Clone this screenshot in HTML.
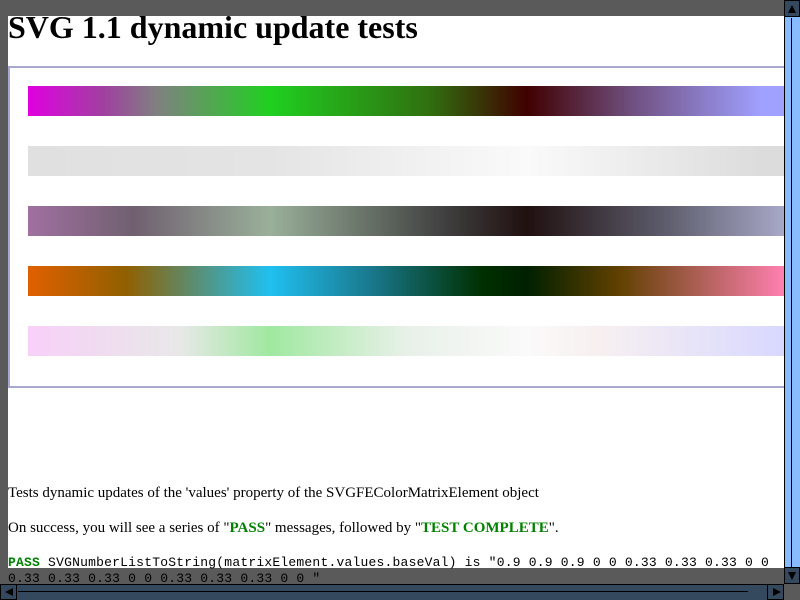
<!DOCTYPE html>
<html><head><style>
*{margin:0;padding:0}
body{width:800px;height:600px;background:#5a5a5a;position:relative;overflow:hidden;font-family:"Liberation Serif",serif}
.wh{position:absolute;left:8px;top:16px;width:776px;height:552px;background:#fff}
h1{position:absolute;left:8px;top:9px;font-size:32px;font-weight:bold;white-space:nowrap;line-height:36px}
.box{position:absolute;left:8px;top:66px;width:790px;height:318px;border:2px solid #a8a8d0;border-right:none}
.bar{position:absolute;left:28px;width:756px;height:30px}
.t{position:absolute;left:8px;font-size:15px;white-space:nowrap}
.g{color:#008000;font-weight:bold}
.m{position:absolute;left:8px;font-family:"Liberation Mono",monospace;font-size:13px;letter-spacing:0.21px;white-space:nowrap;line-height:16px}
.vs{position:absolute;left:784px;top:0;width:16px;height:584px;background:#88bbff;border-left:1px solid #000;box-sizing:border-box}
.btn{position:absolute;background:#34495e;border:1px solid #000;box-sizing:border-box}
.hs{position:absolute;left:0;top:584px;width:784px;height:16px;background:#34495e;border-top:1px solid #000;box-sizing:border-box}
</style></head><body>
<div class="wh"></div>
<h1>SVG 1.1 dynamic update tests</h1>
<div class="box"></div>
<div class="bar" style="top:86px;background:linear-gradient(90deg,#e000e0 0%,#a040a0 10%,#808080 17%,#20d020 32%,#307010 53%,#400000 66%,#705080 80%,#a0a0ff 97%,#a0a0ff 100%)"></div>
<div class="bar" style="top:146px;background:linear-gradient(90deg,#e0e0e0 0%,#e4e4e4 32%,#fafafa 66%,#dcdcdc 97%)"></div>
<div class="bar" style="top:206px;background:linear-gradient(90deg,#a070a0 0%,#706070 14%,#9ab09a 32%,#404040 55%,#201010 66%,#606070 85%,#a8a8c8 100%)"></div>
<div class="bar" style="top:266px;background:linear-gradient(90deg,#e06000 0%,#906000 13%,#20c0f0 32%,#1a7a90 45%,#003000 60%,#002000 66%,#604000 78%,#ff80b0 100%)"></div>
<div class="bar" style="top:326px;background:linear-gradient(90deg,#f8d0f8 0%,#e8e8e8 20%,#a0e8a0 32%,#e8f0e8 50%,#fafafa 66%,#f8f0f0 75%,#d8d8ff 100%)"></div>
<div class="t" style="top:485px">Tests dynamic updates of the 'values' property of the SVGFEColorMatrixElement object</div>
<div class="t" style="top:520px">On success, you will see a series of "<span class="g">PASS</span>" messages, followed by "<span class="g">TEST COMPLETE</span>".</div>
<div class="m" style="top:555px"><span class="g">PASS</span> SVGNumberListToString(matrixElement.values.baseVal) is "0.9 0.9 0.9 0 0 0.33 0.33 0.33 0 0<br>0.33 0.33 0.33 0 0 0.33 0.33 0.33 0 0 "</div>
<div class="vs">
<div style="position:absolute;left:6px;top:18px;width:1px;height:550px;background:#000"></div>
<div class="btn" style="left:-1px;top:0;width:16px;height:17px"><div style="position:absolute;left:3px;top:4px;border-left:4px solid transparent;border-right:4px solid transparent;border-bottom:8px solid #000"></div></div>
<div class="btn" style="left:-1px;top:567px;width:16px;height:17px"><div style="position:absolute;left:3px;top:4px;border-left:4px solid transparent;border-right:4px solid transparent;border-top:8px solid #000"></div></div>
</div>
<div class="hs">
<div style="position:absolute;left:18px;top:6px;width:730px;height:1px;background:#000"></div>
<div class="btn" style="left:0;top:-1px;width:17px;height:16px"><div style="position:absolute;left:4px;top:3px;border-top:4px solid transparent;border-bottom:4px solid transparent;border-right:8px solid #000"></div></div>
<div class="btn" style="left:767px;top:-1px;width:17px;height:16px"><div style="position:absolute;left:5px;top:3px;border-top:4px solid transparent;border-bottom:4px solid transparent;border-left:8px solid #000"></div></div>
</div>
<div style="position:absolute;left:784px;top:584px;width:16px;height:16px;background:#5a5a5a"></div>
</body></html>
